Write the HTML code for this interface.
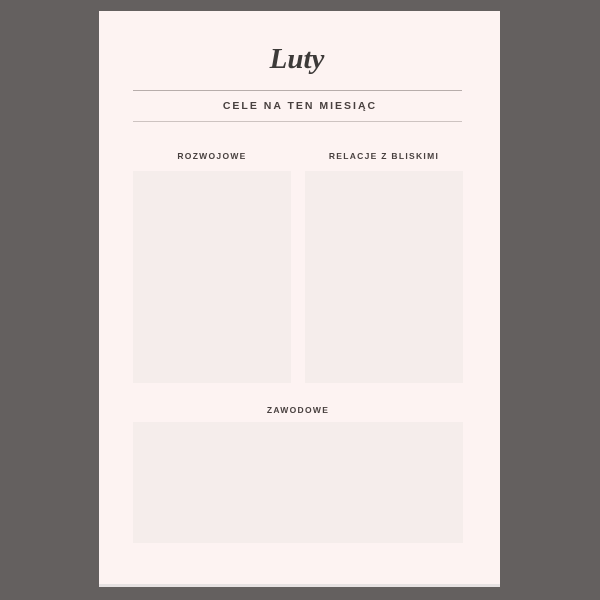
<!DOCTYPE html>
<html><head><style>
body{margin:0;width:600px;height:600px;background:#64605f;position:relative;overflow:hidden;font-family:"Liberation Sans",sans-serif}
.page{position:absolute;left:99px;top:11px;width:401px;height:576px;background:#fdf3f2;border-bottom:3px solid #e6e2e2;box-sizing:border-box}
.t{position:absolute;left:0;width:100%;text-align:center;color:#3d3a39}
.line{position:absolute;left:133px;width:329px;height:1px;background:#b7adab}
.box{position:absolute;background:#f5edeb}
.lab{position:absolute;text-align:center;font-size:8.5px;font-weight:bold;letter-spacing:1.3px;color:#48403f}
</style></head><body>
<div class="page"></div>
<div class="t" style="top:43px;font-family:'Liberation Serif',serif;font-style:italic;font-weight:bold;font-size:29px;left:-3px">Luty</div>
<div class="line" style="top:90px"></div>
<div class="t" style="top:100px;font-size:10.5px;font-weight:bold;letter-spacing:2px;left:0px;color:#48403f">CELE NA TEN MIESIĄC</div>
<div class="line" style="top:121px;background:#cdc3c1"></div>
<div class="lab" style="left:133px;width:158px;top:151px">ROZWOJOWE</div>
<div class="lab" style="left:305px;width:158px;top:151px">RELACJE Z BLISKIMI</div>
<div class="box" style="left:133px;top:171px;width:158px;height:212px"></div>
<div class="box" style="left:305px;top:171px;width:158px;height:212px"></div>
<div class="lab" style="left:133px;width:330px;top:405px">ZAWODOWE</div>
<div class="box" style="left:133px;top:422px;width:330px;height:121px"></div>
</body></html>
